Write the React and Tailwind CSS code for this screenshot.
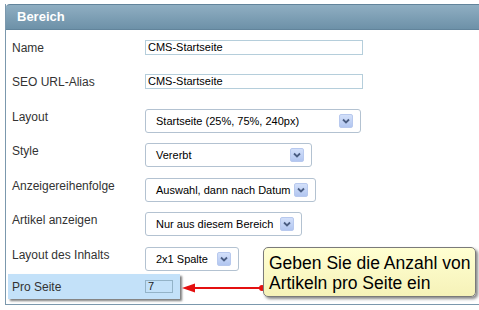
import React from 'react';

const FONT = { fontFamily: '"Liberation Sans", Arial, sans-serif' };

function SelectArrow() {
  return (
    <span className="flex h-[14px] w-[14px] items-center justify-center rounded-[2px] border border-[#b8c9ee] bg-gradient-to-b from-[#d3e0fa] to-[#b2c6f0]">
      <svg width="8" height="6" viewBox="0 0 8 6">
        <path d="M1 1.5 L4 4.5 L7 1.5" fill="none" stroke="#4a5d82" strokeWidth="1.8" />
      </svg>
    </span>
  );
}

function Select({ value, width }) {
  return (
    <div
      className={`flex h-[24px] items-center justify-between rounded-[3px] border border-[#b3c2d1] bg-white pl-[10px] pr-[7px] text-[11px] text-black ${width}`}
    >
      <span className="whitespace-nowrap">{value}</span>
      <SelectArrow />
    </div>
  );
}

function Row({ label, children, className, raise }) {
  return (
    <div className={`flex items-center ${className}`}>
      <span className={`w-[133px] shrink-0 whitespace-nowrap text-[12px] text-[#333] ${raise ? 'mb-[8px]' : ''}`}>
        {label}
      </span>
      {children}
    </div>
  );
}

export default function App() {
  return (
    <div className="relative h-[310px] w-[479px] overflow-hidden bg-white" style={FONT}>
      <div className="ml-[5px] mt-[4px] border-b border-l border-[#7b98ad]">
        {/* header */}
        <div className="flex h-[26px] items-center rounded-tl-[4px] border-t border-b border-[#62849b] bg-gradient-to-b from-[#8faec2] to-[#6d91a8] pl-[11px]">
          <span className="text-[13px] font-bold text-white">Bereich</span>
        </div>

        <div className="flex flex-col pl-[6px]">
          <Row label="Name" className="mt-[10px] h-[15px]">
            <div className="flex h-[15px] w-[218px] items-center border border-[#b5cedb] pl-[2px] text-[11px] text-black">
              CMS-Startseite
            </div>
          </Row>
          <Row label="SEO URL-Alias" className="mt-[19px] h-[15px]">
            <div className="flex h-[15px] w-[218px] items-center border border-[#b5cedb] pl-[2px] text-[11px] text-black">
              CMS-Startseite
            </div>
          </Row>
          <Row label="Layout" className="mt-[20px] h-[24px]" raise>
            <Select value="Startseite (25%, 75%, 240px)" width="w-[216px]" />
          </Row>
          <Row label="Style" className="mt-[10px] h-[24px]" raise>
            <Select value="Vererbt" width="w-[167px]" />
          </Row>
          <Row label="Anzeigereihenfolge" className="mt-[11px] h-[24px]" raise>
            <Select value="Auswahl, dann nach Datum" width="w-[171px]" />
          </Row>
          <Row label="Artikel anzeigen" className="mt-[10px] h-[24px]" raise>
            <Select value="Nur aus diesem Bereich" width="w-[157px]" />
          </Row>
          <Row label="Layout des Inhalts" className="mt-[11px] h-[24px]" raise>
            <Select value="2x1 Spalte" width="w-[94px]" />
          </Row>

          {/* highlighted row */}
          <div className="-ml-[4px] mb-[5px] mt-[3px] flex h-[25px] w-[172px] items-center bg-[#c3e1f9] pl-[4px] shadow-[2px_2px_2px_#7d7d7d]">
            <span className="w-[133px] shrink-0 text-[12px] text-[#333]">Pro Seite</span>
            <div className="flex h-[13px] w-[28px] items-center border border-[#93b3c8] pl-[2px] text-[11px] text-[#222]">
              7
            </div>
          </div>
        </div>
      </div>

      {/* arrow */}
      <svg className="absolute left-[180px] top-[282px]" width="88" height="12" viewBox="0 0 88 12">
        <line x1="12" y1="6" x2="82" y2="6" stroke="#e41010" strokeWidth="2" />
        <polygon points="2,6 15,1.5 15,10.5" fill="#e41010" />
        <circle cx="82" cy="6" r="3" fill="#e41010" />
      </svg>

      {/* tooltip */}
      <div className="absolute left-[263px] top-[247px] h-[50px] w-[213px] rounded-[5px] border border-[#7a7a7a] bg-gradient-to-b from-[#ffffd2] to-[#f6f2b8] pl-[5px] pt-[5px] text-[17.5px] leading-[20px] text-black shadow-[2px_2px_3px_#8a8a8a]">
        <div className="whitespace-nowrap">Geben Sie die Anzahl von</div>
        <div className="whitespace-nowrap">Artikeln pro Seite ein</div>
      </div>
    </div>
  );
}
